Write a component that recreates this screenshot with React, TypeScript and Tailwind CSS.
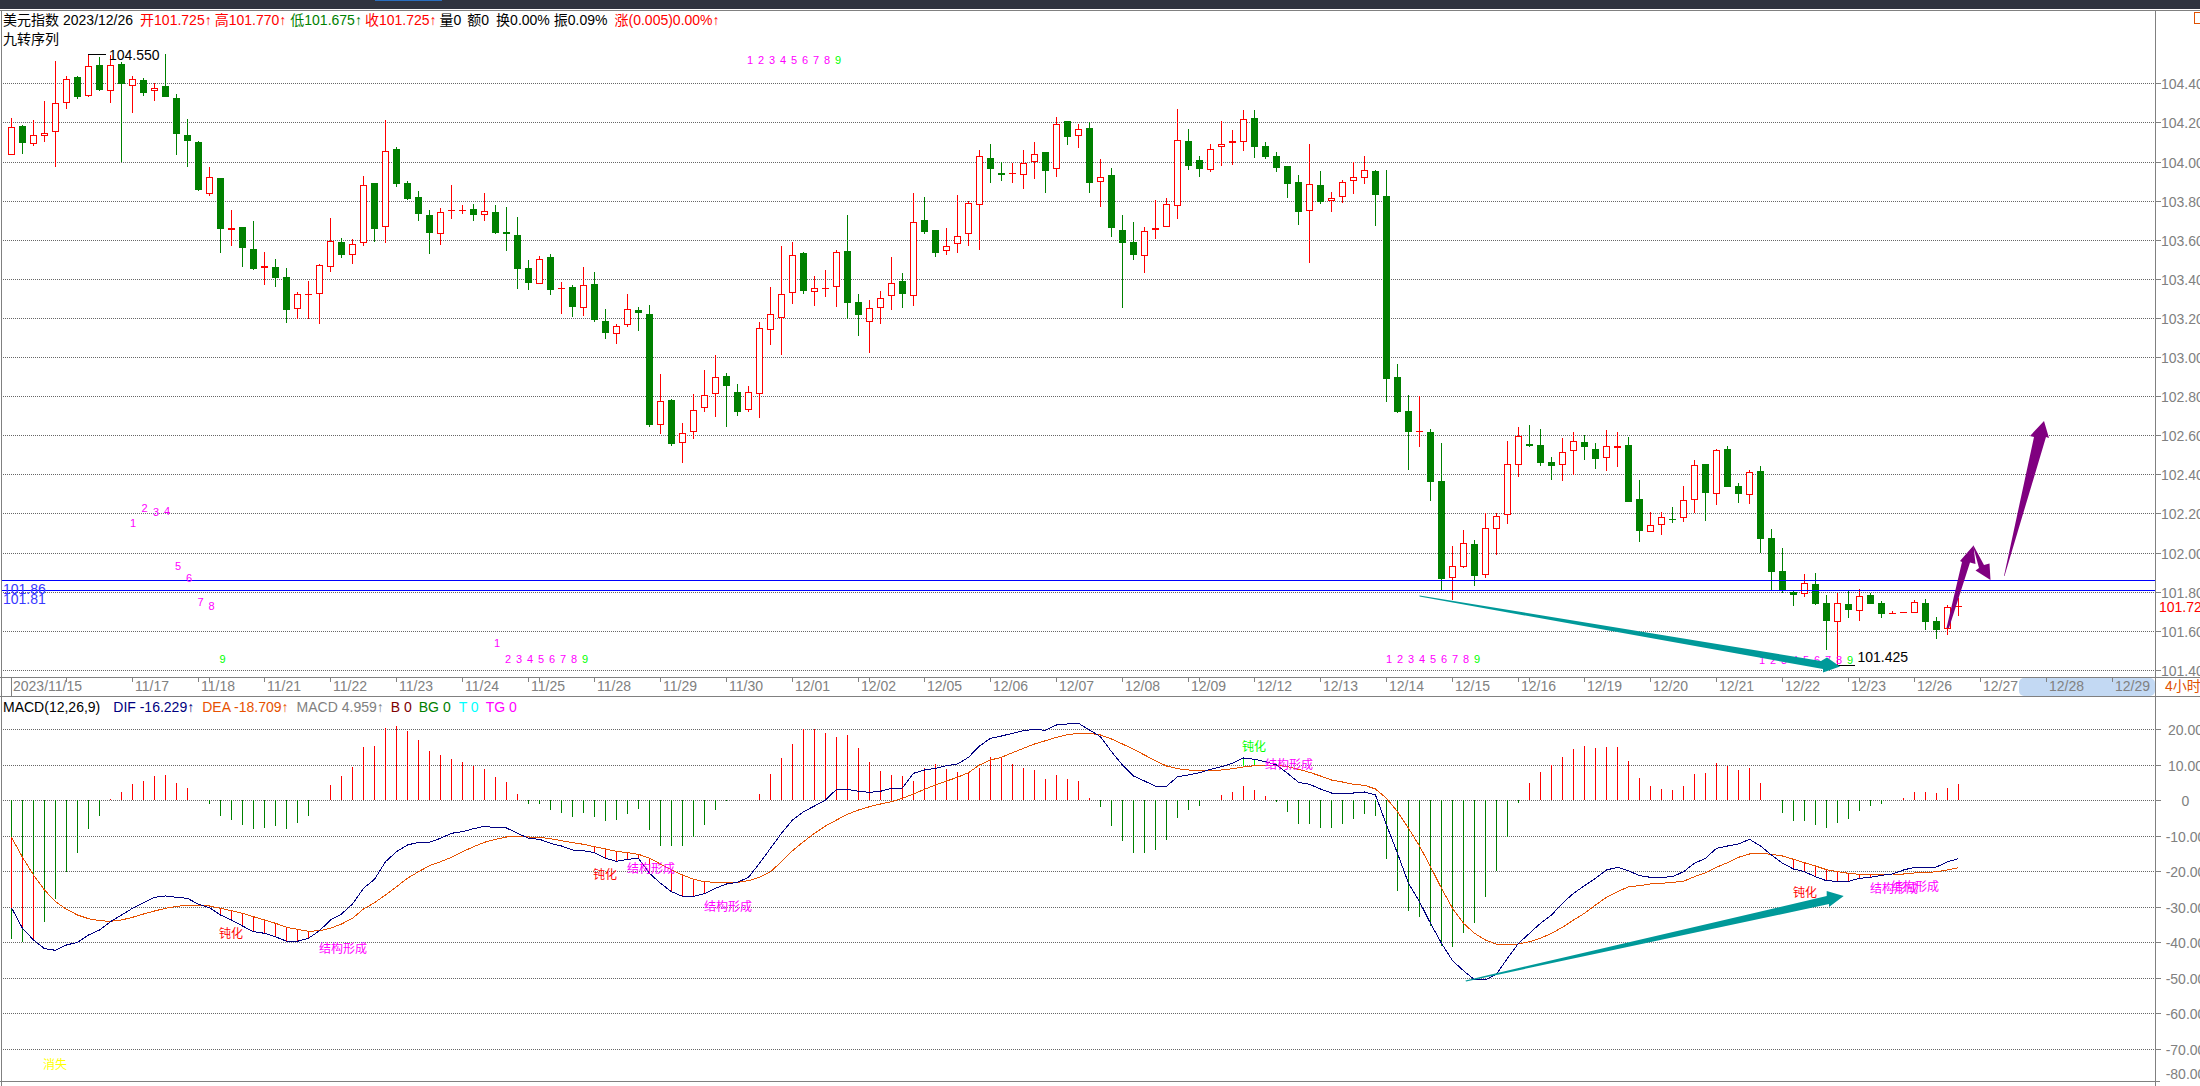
import React from "react";

const G = 0, R = 1;
// type, high, body top, body bottom, low (page pixels)
const candles: number[][] = [
[R,118,127,155,155],[G,125,126,143,154],[R,120,135,144,146],[R,101,133,136,142],[R,61,103,132,167],[R,76,79,103,109],[G,76,77,97,99],[R,54,66,96,97],[G,57,65,90,91],[R,55,65,91,103],
[G,62,64,84,162],[R,76,79,86,113],[G,78,80,93,96],[R,83,88,91,101],[G,54,86,97,97],[G,94,98,134,155],[G,119,135,141,167],[G,141,142,190,191],[R,167,177,194,196],[G,178,178,229,253],
[R,210,228,230,246],[G,227,227,248,267],[G,221,249,269,270],[R,252,266,268,285],[G,259,267,278,287],[G,268,277,310,323],[R,292,294,309,319],[R,281,294,295,319],[R,264,265,294,324],[R,218,241,267,272],
[G,238,242,255,258],[R,239,244,255,264],[R,176,185,243,246],[G,183,183,229,242],[R,120,151,227,243],[G,147,149,184,187],[G,181,183,199,200],[G,191,197,214,221],[G,210,215,233,254],[R,208,212,234,245],
[R,185,210,211,219],[R,205,210,211,214],[G,204,209,215,221],[R,193,211,215,221],[G,205,212,233,234],[G,207,232,234,251],[G,217,235,269,289],[G,260,268,283,290],[R,256,259,284,284],[G,254,257,290,295],
[R,282,288,289,314],[G,285,287,307,317],[R,267,285,308,316],[G,272,284,320,322],[G,309,321,333,339],[R,324,326,334,344],[R,294,309,325,327],[G,307,310,313,331],[G,305,314,425,427],[R,374,401,425,434],
[G,399,400,444,446],[R,423,433,443,463],[R,394,410,432,439],[R,370,395,408,412],[R,355,377,394,417],[G,373,376,386,427],[G,384,392,412,416],[R,386,392,410,412],[R,322,328,394,418],[R,287,314,330,345],
[R,246,294,318,355],[R,242,255,293,304],[G,252,253,291,294],[R,276,288,292,306],[R,270,288,289,297],[R,250,252,287,307],[G,215,251,303,319],[G,294,302,315,336],[R,300,308,322,353],[R,291,298,308,324],
[R,257,283,296,310],[G,273,281,294,308],[R,193,222,296,306],[G,197,220,232,234],[G,230,230,253,257],[R,228,246,251,255],[R,195,236,244,253],[R,201,203,234,246],[R,150,156,205,250],[G,144,158,169,183],
[G,162,173,175,181],[R,163,173,174,183],[R,150,163,175,189],[R,142,154,162,179],[G,152,152,171,193],[R,117,124,169,177],[G,121,121,137,145],[R,124,129,136,148],[G,122,128,183,193],[R,159,177,182,207],
[G,168,175,228,237],[G,215,230,243,308],[G,222,242,255,260],[R,227,231,256,273],[R,200,228,230,239],[R,198,204,227,227],[R,109,140,206,219],[G,129,141,166,170],[G,156,160,169,177],[R,144,149,170,172],
[R,121,144,147,166],[R,130,141,143,165],[R,110,119,142,151],[G,110,118,147,158],[G,142,146,157,159],[G,152,156,168,172],[G,166,166,184,198],[G,175,182,212,225],[R,144,184,211,263],[G,171,185,202,204],
[R,192,198,201,212],[R,180,182,197,203],[R,162,177,181,194],[R,156,170,178,184],[G,170,171,195,226],[G,170,196,379,402],[G,364,377,412,413],[G,395,411,432,470],[R,396,431,432,447],[G,429,432,482,501],
[G,443,481,579,590],[R,546,566,578,600],[R,530,543,567,568],[G,540,544,576,586],[R,513,528,575,578],[R,513,516,529,555],[R,441,464,515,524],[R,427,436,465,477],[G,425,444,446,447],[G,429,445,463,466],
[G,457,462,466,480],[R,438,452,465,481],[R,432,441,451,475],[G,435,442,447,460],[G,443,449,459,469],[R,430,446,458,471],[R,432,446,448,467],[G,437,445,502,502],[G,480,499,531,542],[R,512,525,532,532],
[R,512,517,525,535],[G,507,519,520,523],[R,486,500,518,522],[R,460,465,500,513],[G,464,464,493,521],[R,449,450,494,505],[G,446,449,487,487],[G,483,486,494,503],[R,470,472,495,504],[G,466,471,539,553],
[G,529,538,572,590],[G,548,571,590,593],[G,590,592,595,606],[R,574,583,594,597],[G,573,584,604,605],[G,595,603,621,650],[R,593,603,622,665],[G,591,604,610,618],[R,589,596,611,621],[G,593,595,604,604],
[G,601,603,614,618],[R,611,613,614,614],[R,612,612,613,613],[R,600,602,613,613],[G,599,603,622,630],[G,617,621,630,639],[R,605,607,629,635],[R,598,606,607,616],
];

// histogram end, DIF, DEA as rows measured from y=720 at 3 units per pixel
const hist = [657,667,660,605,536,455,398,326,288,238,215,192,182,168,165,188,204,241,251,288,300,315,326,324,318,326,308,288,242,194,168,140,81,78,24,17,33,60,93,105,117,126,138,147,171,186,222,251,252,270,279,291,279,291,303,300,282,267,330,378,378,378,350,315,270,243,241,241,222,162,114,72,27,27,39,51,45,84,126,153,165,168,183,144,132,147,156,158,144,111,114,132,144,150,177,165,177,183,234,261,318,363,399,399,390,360,294,270,258,241,225,216,198,210,228,246,276,312,312,324,324,312,297,282,288,417,513,573,591,618,678,681,639,609,531,453,350,249,189,156,135,111,87,78,84,81,81,123,174,198,207,210,198,162,159,129,138,150,144,189,241,279,303,303,315,324,309,297,273,258,252,241,234,216,216,219,204,192];
const dif = [563,625,660,686,691,675,667,645,630,605,585,565,548,532,528,532,535,553,563,585,600,618,635,640,650,664,664,655,632,600,582,552,505,478,425,395,375,367,367,355,340,335,326,319,323,324,340,355,358,370,378,390,392,398,415,424,418,415,460,490,515,529,529,521,505,492,487,472,430,385,340,300,275,258,240,208,208,214,217,214,205,204,160,150,145,137,132,112,78,55,48,40,32,28,31,15,12,10,30,50,95,135,168,183,199,199,170,165,158,148,140,130,114,118,125,135,160,187,193,207,219,219,219,216,225,315,400,490,545,610,670,722,752,779,779,762,715,670,640,610,585,550,520,497,475,450,442,452,467,472,472,470,455,430,415,385,378,372,358,378,405,430,447,455,470,482,484,484,475,472,466,462,450,442,442,441,425,416];
const dea = [352,412,465,510,545,568,585,596,602,604,600,592,582,573,565,559,556,556,558,565,572,580,590,600,610,622,628,634,632,625,612,595,567,548,525,500,475,455,437,425,412,395,380,367,358,351,349,351,352,356,362,368,373,380,387,394,398,403,415,432,450,465,478,485,487,487,487,482,472,455,425,392,365,340,318,300,283,270,260,252,245,235,222,208,195,183,172,158,135,120,112,98,85,72,62,52,44,40,40,45,57,72,88,105,122,138,146,150,152,152,150,146,141,137,135,135,140,148,157,168,180,186,193,196,207,235,275,325,378,440,505,565,610,640,660,673,673,672,665,655,640,622,600,580,555,532,515,500,497,492,490,487,484,470,458,442,428,412,402,400,403,408,418,428,438,449,455,460,463,463,463,462,462,459,458,455,450,443];

const bx = (i: number) => 11 + 11 * i;
const my = (v: number) => 720 + v / 3;
const RED = "#ff0000", GREEN = "#008000", GRAY = "#808080", MAG = "#ff00ff", LIME = "#00ff00";

const mainGrid = [83, 122, 162, 201, 240, 279, 318, 357, 396, 435, 474, 513, 553, 592, 631, 670];
const mainLabels = ["104.40","104.20","104.00","103.80","103.60","103.40","103.20","103.00","102.80","102.60","102.40","102.20","102.00","101.80","101.60","101.40"];
const macdGrid = [729, 765, 800, 836, 871, 907, 942, 978, 1013, 1049];
const macdLabels = ["20.00","10.00","0","-10.00","-20.00","-30.00","-40.00","-50.00","-60.00","-70.00"];
const dates = ["11/17","11/18","11/21","11/22","11/23","11/24","11/25","11/28","11/29","11/30","12/01","12/02","12/05","12/06","12/07","12/08","12/09","12/12","12/13","12/14","12/15","12/16","12/19","12/20","12/21","12/22","12/23","12/26","12/27","12/28","12/29"];

// nine-turn sequence markers: [x, y, text]
const nine: [number, number, string][] = [
  ...[1,2,3,4,5,6,7,8,9].map((n, k) => [750 + 11 * k, 60, String(n)] as [number, number, string]),
  [133,523,"1"],[144.5,508,"2"],[156,512,"3"],[167,511,"4"],[178,566,"5"],[189,578,"6"],[200.5,602,"7"],[211.5,606,"8"],[222.5,659,"9"],
  [497,643,"1"],...[2,3,4,5,6,7,8,9].map((n, k) => [508 + 11 * k, 659, String(n)] as [number, number, string]),
  ...[1,2,3,4,5,6,7,8,9].map((n, k) => [1389 + 11 * k, 659, String(n)] as [number, number, string]),
  ...[1,2,3,4,5,6,7,8,9].map((n, k) => [1762 + 11 * k, 660, String(n)] as [number, number, string]),
];

const macdNotes: [number, number, string, string][] = [
  [219, 938, "钝化", RED], [319, 953, "结构形成", MAG],
  [593, 879, "钝化", RED], [627, 873, "结构形成", MAG], [704, 911, "结构形成", MAG],
  [1242, 751, "钝化", LIME], [1265, 769, "结构形成", MAG],
  [1793, 897, "钝化", RED], [1870, 893, "结构形成", MAG], [1891, 891, "结构形成", MAG],
  [43, 1069, "消失", "#ffff00"],
];

const connectors: [number, number, string][] = [[0, 2, RED], [19, 27, RED], [53, 58, RED], [60, 63, RED], [112, 113, LIME], [162, 170, RED]];

function Grid({ rows }: { rows: number[] }) {
  return (
    <>
      {rows.map((y) => (
        <g key={y}>
          <line x1={3} x2={2155} y1={y + 0.5} y2={y + 0.5} stroke="#666666" strokeDasharray="1 1" />
          <rect x={2156} y={y} width={5} height={1} fill={GRAY} />
        </g>
      ))}
    </>
  );
}

function Frame({ top, bottom }: { top: number; bottom: number }) {
  return (
    <>
      <rect x={1} y={top} width={1} height={bottom - top} fill={GRAY} />
      <rect x={2155} y={top} width={1} height={bottom - top} fill={GRAY} />
    </>
  );
}

function MainChart() {
  return (
    <svg viewBox="0 11 2200 666" className="block h-[666px] w-[2200px]">
      <Frame top={11} bottom={677} />
      <Grid rows={mainGrid} />
      {mainLabels.map((t, i) => (
        <text key={t} x={2161} y={mainGrid[i] + 5.5} fill={GRAY} className="text-[14px]">{t}</text>
      ))}
      <rect x={2194.5} y={12.5} width={12} height={11} fill="none" stroke="#e05000" />
      <text x={2159} y={612} fill={RED} className="text-[14px]">101.725</text>

      <g shapeRendering="crispEdges">
        {candles.map(([t, hi, top, bot, lo], i) => {
          const x = bx(i);
          const c = t === R ? RED : GREEN;
          const h = bot - top;
          return (
            <g key={i}>
              <rect x={x} y={hi} width={1} height={Math.max(lo - hi, 1)} fill={c} />
              {t === G || h <= 2 ? (
                <rect x={x - 3} y={top} width={7} height={Math.max(h, 1)} fill={c} />
              ) : (
                <rect x={x - 2.5} y={top + 0.5} width={6} height={h - 1} fill="#ffffff" stroke={c} />
              )}
            </g>
          );
        })}
      </g>

      <rect x={2} y={580} width={2153} height={1} fill="#0000ff" />
      <rect x={2} y={590} width={2153} height={1} fill="#0000ff" />
      <text x={3} y={594} fill="#3a3aff" className="text-[14px]">101.86</text>
      <text x={3} y={604} fill="#3a3aff" className="text-[14px]">101.81</text>

      <rect x={88} y={54} width={18} height={1} fill="#000000" />
      <text x={109} y={60} fill="#000000" className="text-[14px]">104.550</text>
      <rect x={1838} y={665} width={17} height={1} fill="#000000" />
      <text x={1857.5} y={662} fill="#000000" className="text-[14px]">101.425</text>

      {nine.map(([x, y, n], i) => (
        <text key={i} x={x} y={y + 4} textAnchor="middle" fill={n === "9" ? LIME : MAG} className="text-[11px]">{n}</text>
      ))}

      <polygon points="1419.5,595.5 1821,661 1827,657.5 1840,666.5 1823,672.5 1823,669 1419.5,596.5" fill="#009999" />
      <polygon points="1946.5,628 1962,562 1960,561 1973.5,545.5 1975.5,564 1970,562.5 1949,628" fill="#800080" />
      <polygon points="1973.5,545.5 1984,565 1989.5,563.5 1990.5,580 1975.5,570.5 1979,568 1973,546" fill="#800080" />
      <polygon points="2004,576 2034,437 2030,436 2044,421 2049,438 2046,437 2004.5,576" fill="#800080" />
    </svg>
  );
}

function TimeAxis() {
  const ticks = Array.from({ length: 33 }, (_, k) => 66 * k).filter((x) => x > 0);
  const extra = [209, 539, 869, 1199, 1529, 1859];
  return (
    <svg viewBox="0 677 2200 20" className="block h-[20px] w-[2200px]">
      <rect x={2019} y={678} width={136} height={18} rx={5} fill="#c3d9f3" />
      <rect x={0} y={677} width={2200} height={1} fill={GRAY} />
      <rect x={0} y={696} width={2200} height={1} fill={GRAY} />
      <Frame top={677} bottom={697} />
      <rect x={11} y={677} width={1} height={19} fill={GRAY} />
      {[...ticks, ...extra].map((x) => (
        <rect key={x} x={x} y={677} width={1} height={5} fill={GRAY} />
      ))}
      <text x={13} y={691} fill={GRAY} className="text-[14px]">2023/11/15</text>
      {dates.map((d, k) => (
        <text key={d} x={135 + 66 * k} y={691} fill={GRAY} className="text-[14px]">{d}</text>
      ))}
      <text x={2165} y={691} fill="#e05000" className="text-[14px]">4小时</text>
    </svg>
  );
}

function MacdChart() {
  const line = (a: number[]) => a.map((v, i) => `${bx(i) + 0.5},${my(v).toFixed(1)}`).join(" ");
  return (
    <svg viewBox="0 697 2200 389" className="block h-[389px] w-[2200px]">
      <Frame top={697} bottom={1086} />
      <Grid rows={macdGrid} />
      {macdLabels.map((t, i) => (
        <text key={t} x={2185.5} y={macdGrid[i] + 5.5} textAnchor="middle" fill={GRAY} className="text-[14px]">{t}</text>
      ))}
      <text x={2185.5} y={1079} textAnchor="middle" fill={GRAY} className="text-[14px]">-80.00</text>
      <rect x={0} y={1081} width={2160} height={1} fill={GRAY} />

      <g shapeRendering="crispEdges">
        {hist.map((v, i) => {
          const y = my(v);
          if (Math.abs(y - 800.3) < 0.5) return null;
          return v > 241 ? (
            <rect key={i} x={bx(i)} y={800} width={1} height={y - 800} fill={GREEN} />
          ) : (
            <rect key={i} x={bx(i)} y={y} width={1} height={800 - y} fill={RED} />
          );
        })}
        {connectors.flatMap(([a, b, c]) =>
          Array.from({ length: b - a + 1 }, (_, k) => a + k).map((i) => {
            const y1 = my(Math.min(dif[i], dea[i]));
            const y2 = my(Math.max(dif[i], dea[i]));
            return <rect key={`c${i}`} x={bx(i)} y={y1} width={1} height={y2 - y1} fill={c} />;
          })
        )}
        <polyline points={line(dea)} fill="none" stroke="#e65100" />
        <polyline points={line(dif)} fill="none" stroke="#000080" />
      </g>

      {macdNotes.map(([x, y, t, c], i) => (
        <text key={i} x={x} y={y} fill={c} className="text-[12px]">{t}</text>
      ))}

      <polygon points="1465.5,980.5 1826.7,896 1826.7,891 1843.7,896 1829,907 1829,904 1466,981.5" fill="#009999" />
    </svg>
  );
}

export default function App() {
  return (
    <div className="flex h-[1086px] w-[2200px] flex-col overflow-hidden bg-white font-['Liberation_Sans','Noto_Sans_CJK_SC',sans-serif] text-[14px] leading-[19px] text-black">
      <div className="h-[9px] shrink-0 bg-[#2f3440] pl-[375px]">
        <div className="h-[1px] w-[67px] bg-[#2a6fc0]" />
      </div>
      <div className="h-[1px] shrink-0 bg-white" />
      <div className="h-[1px] shrink-0 bg-[#808080]" />

      <div className="relative shrink-0">
        <MainChart />
        <div className="absolute left-[3px] top-0 whitespace-pre">
          <div className="flex">
            <span>美元指数</span>
            <span className="ml-[4px]">2023/12/26</span>
            <span className="ml-[7px] text-[#ff0000]">开101.725↑</span>
            <span className="ml-[3px] text-[#ff0000]">高101.770↑</span>
            <span className="ml-[4px] text-[#008000]">低101.675↑</span>
            <span className="ml-[3px] text-[#ff0000]">收101.725↑</span>
            <span className="ml-[3px]">量0</span>
            <span className="ml-[6px]">额0</span>
            <span className="ml-[7px]">换0.00%</span>
            <span className="ml-[4px]">振0.09%</span>
            <span className="ml-[7px] text-[#ff0000]">涨(0.005)0.00%↑</span>
          </div>
          <div>九转序列</div>
        </div>
      </div>

      <div className="shrink-0">
        <TimeAxis />
      </div>

      <div className="relative shrink-0">
        <MacdChart />
        <div className="absolute left-[3px] top-0 flex whitespace-pre leading-[20px]">
          <span>MACD(12,26,9)</span>
          <span className="ml-[13px] text-[#000080]">DIF -16.229↑</span>
          <span className="ml-[8px] text-[#e65100]">DEA -18.709↑</span>
          <span className="ml-[8px] text-[#808080]">MACD 4.959↑</span>
          <span className="ml-[7px] text-[#800000]">B 0</span>
          <span className="ml-[7px] text-[#008000]">BG 0</span>
          <span className="ml-[8px] text-[#00ffff]">T 0</span>
          <span className="ml-[7px] text-[#ff00ff]">TG 0</span>
        </div>
      </div>
    </div>
  );
}
